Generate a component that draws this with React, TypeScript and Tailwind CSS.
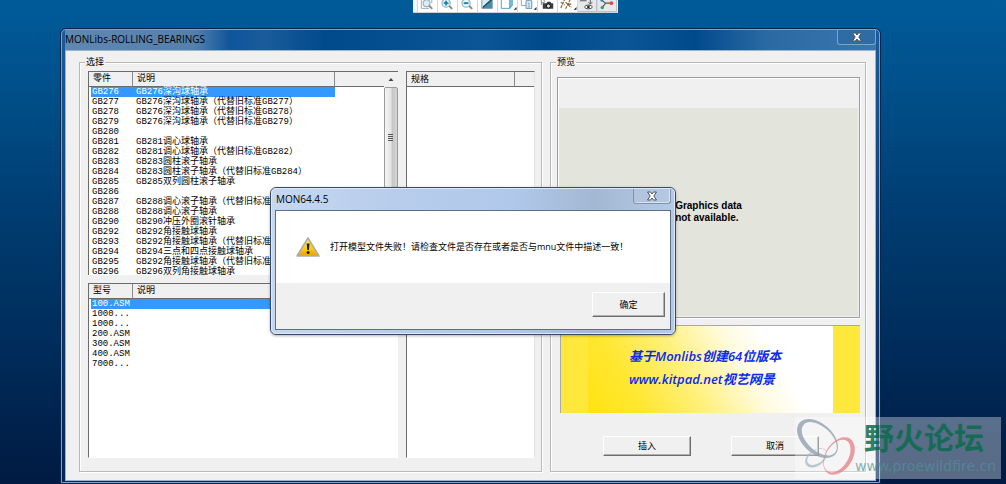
import type { ReactNode } from "react";

type Row = [string, string];

const parts: Row[] = [
  ["GB276", "GB276深沟球轴承"],
  ["GB277", "GB276深沟球轴承（代替旧标准GB277）"],
  ["GB278", "GB276深沟球轴承（代替旧标准GB278）"],
  ["GB279", "GB276深沟球轴承（代替旧标准GB279）"],
  ["GB280", ""],
  ["GB281", "GB281调心球轴承"],
  ["GB282", "GB281调心球轴承（代替旧标准GB282）"],
  ["GB283", "GB283圆柱滚子轴承"],
  ["GB284", "GB283圆柱滚子轴承（代替旧标准GB284）"],
  ["GB285", "GB285双列圆柱滚子轴承"],
  ["GB286", ""],
  ["GB287", "GB288调心滚子轴承（代替旧标准GB287）"],
  ["GB288", "GB288调心滚子轴承"],
  ["GB290", "GB290冲压外圈滚针轴承"],
  ["GB292", "GB292角接触球轴承"],
  ["GB293", "GB292角接触球轴承（代替旧标准GB293）"],
  ["GB294", "GB294三点和四点接触球轴承"],
  ["GB295", "GB292角接触球轴承（代替旧标准GB295）"],
  ["GB296", "GB296双列角接触球轴承"],
];

const models: Row[] = [
  ["100.ASM", ""],
  ["1000...", ""],
  ["1000...", ""],
  ["200.ASM", ""],
  ["300.ASM", ""],
  ["400.ASM", ""],
  ["7000...", ""],
];

const headCell =
  "h-[15px] border-r border-b border-r-[#8a8a8a] border-b-[#6a6a6a] bg-[#f0f0f0] p-0 pl-1 text-left font-normal";

function ListTable({ heads, rows }: { heads: Row; rows: Row[] }) {
  return (
    <table className="w-full table-fixed border-separate border-spacing-0 self-start font-['Liberation_Mono','Noto_Sans_CJK_SC',monospace] text-[9px] leading-[10px] text-black">
      <colgroup>
        <col className="w-[44px]" />
        <col className="w-[202px]" />
        <col />
      </colgroup>
      <thead>
        <tr>
          <th className={headCell}>{heads[0]}</th>
          <th className={headCell}>{heads[1]}</th>
          <th className="h-[15px] border-b border-[#6a6a6a] bg-[#f0f0f0] p-0" />
        </tr>
      </thead>
      <tbody className="whitespace-nowrap">
        {rows.map(([name, text], i) => (
          <tr key={i} className={i === 0 ? "text-white" : ""}>
            <td
              className={
                "h-[10px] border-l-2 border-transparent bg-clip-padding p-0 pl-px " +
                (i === 0 ? "bg-[#3399ff]" : "")
              }
            >
              {name}
            </td>
            <td className={"h-[10px] p-0 pl-[3px] " + (i === 0 ? "bg-[#3399ff]" : "")}>{text}</td>
            <td className="h-[10px] p-0" />
          </tr>
        ))}
      </tbody>
    </table>
  );
}

function Group({ title, className, children }: { title: string; className: string; children: ReactNode }) {
  return (
    <fieldset
      className={
        "min-w-0 border border-[#b9b9b9] shadow-[1px_1px_0_#fff,inset_1px_1px_0_#fff] " + className
      }
    >
      <legend className="bg-[#f0f0f0] px-px font-['Noto_Sans_CJK_SC',sans-serif] text-[9px] leading-[10px] text-black">
        {title}
      </legend>
      {children}
    </fieldset>
  );
}

function PushButton({ className, children }: { className: string; children: ReactNode }) {
  return (
    <button
      type="button"
      className={
        "border border-t-white border-r-[#6e6e6e] border-b-[#6e6e6e] border-l-white bg-[#f0f0f0] text-center font-['Noto_Sans_CJK_SC',sans-serif] text-[9px] leading-3 text-black shadow-[inset_-1px_-1px_0_#b0b0b0] " +
        className
      }
    >
      {children}
    </button>
  );
}

function CloseGlyph() {
  return (
    <svg viewBox="0 0 12 10" className="h-[10px] w-3" aria-hidden="true">
      <path
        d="M1.500 1h3L6 3l1.500-2h3L7.800 5l2.700 4h-3L6 7 4.500 9h-3l2.700-4z"
        fill="#fff"
        stroke="#4b5566"
        strokeWidth="1"
        strokeLinejoin="round"
      />
    </svg>
  );
}

function Lens({ mark }: { mark: string }) {
  return (
    <g>
      <circle cx="8.500" cy="4" r="4.300" fill="#e6f3fa" stroke="#9fb4c2" strokeWidth="1.300" />
      <path d="M11.800 7l3.200 3" stroke="#9a8068" strokeWidth="2" />
      <path d={mark} stroke="#1687b8" strokeWidth="2" fill="none" />
    </g>
  );
}

const corner = <path d="M19.500 8v3h-3z" fill="#222" />;

const tools: { label: string; art: ReactNode; pressed?: boolean }[] = [
  {
    label: "Refit",
    art: (
      <g>
        <path d="M3.500 0v9.500h8M14.500 0v4" stroke="#9aa7b0" fill="none" />
        <circle cx="9" cy="4" r="3.600" fill="#d8eef8" stroke="#8fb0c4" strokeWidth="1.200" />
        <path d="M11.500 6.500l3.500 3.500" stroke="#a8866a" strokeWidth="2" />
      </g>
    ),
  },
  { label: "Zoom in", art: <Lens mark="M6 4h5M8.500 1.500v5" /> },
  { label: "Zoom out", art: <Lens mark="M6 4h5" /> },
  {
    label: "Repaint",
    art: (
      <g>
        <path d="M4 0h11v9.500H4z" fill="#d3ebf4" />
        <path d="M15 0v9.500H4.500z" fill="#3d8fae" />
        <path d="M4 0v9.500h11V0" stroke="#7f9aa8" fill="none" />
        <path d="M5 8.500l9.500-8.500" stroke="#153d50" strokeWidth="1.300" />
      </g>
    ),
  },
  {
    label: "Display style",
    art: (
      <g>
        <path d="M3.500 0h9v9.500h-9z" fill="#fff" stroke="#52a2c4" />
        <path d="M12.500 9.500l2.500-3V0h-2.500z" fill="#82c4df" stroke="#52a2c4" />
        {corner}
      </g>
    ),
  },
  {
    label: "Saved views",
    art: (
      <g>
        <path d="M3.500 0v6.500h7V0" fill="#fff" stroke="#98a2aa" />
        <path d="M8.500 1.500h6v8h-6z" fill="#fff" stroke="#5f8ca8" />
        <path d="M10 4h3M10 6h3M10 8h3" stroke="#4a9cc0" />
        {corner}
      </g>
    ),
  },
  {
    label: "View manager",
    art: (
      <g>
        <path d="M3.500 0v6M6.500 0v3M3 3.500h4" stroke="#888" />
        <path d="M5 4h4l1-1.500h3L14 4h2v6H5z" fill="#3c3c40" />
        <circle cx="11" cy="7" r="2.200" fill="#ddd" stroke="#111" />
      </g>
    ),
  },
  {
    label: "Datum display",
    art: (
      <g>
        <path d="M3 9l4-9M3 3l4 3M8 10l5-10M8 3l6 6M11 5h4" stroke="#80622f" strokeWidth="1.200" strokeDasharray="3 1" />
        {corner}
      </g>
    ),
  },
  {
    label: "Annotation display",
    pressed: true,
    art: (
      <g>
        <path d="M2 1.500h7M13 0v5M11 3l2 2 2-2" stroke="#555" fill="none" />
        <ellipse cx="11" cy="8" rx="4" ry="2" fill="#fff" stroke="#444" />
        <circle cx="11" cy="8" r="1.400" fill="#222" />
      </g>
    ),
  },
  {
    label: "Spin center",
    pressed: true,
    art: (
      <g>
        <path d="M8 4L4 1M8 4L5 8M8 4h6" stroke="#555" strokeWidth="1.200" />
        <circle cx="4.500" cy="8.500" r="1.800" fill="#36a36b" />
        <circle cx="14" cy="4" r="2" fill="#dd4b4b" />
        <circle cx="4" cy="1" r="1.500" fill="#3576c4" />
      </g>
    ),
  },
];

function Toolbar() {
  return (
    <div className="absolute top-0 left-[413px] flex h-[13px] overflow-hidden border-b border-[#c9d2da] bg-[#f4f5f6] pr-px pl-1">
      {tools.map((t) => (
        <button
          key={t.label}
          type="button"
          aria-label={t.label}
          className={
            "h-3 w-5 border-l border-[#d4d8dc] " + (t.pressed ? "bg-[#e6e8eb] shadow-[inset_-1px_-1px_0_#bcc0c4]" : "bg-white")
          }
        >
          <svg viewBox="0 1 20 12" className="h-3 w-full" fill="none" aria-hidden="true">
            {t.art}
          </svg>
        </button>
      ))}
    </div>
  );
}

function ErrorDialog() {
  return (
    <div
      role="alertdialog"
      aria-label="MON64.4.5"
      className="absolute top-[187px] left-[270px] w-[406px] rounded-md border border-[#3b4a60] bg-[linear-gradient(90deg,#c6d8f0,#b8cdec_30%,#b0c8ea_60%,#a3b8d2_80%,#b4cbe8)] shadow-[0_1px_3px_rgba(0,0,0,0.3)]"
    >
      <div className="rounded-[5px] border border-[#dce9f8] px-[3px] pb-[3px]">
        <div className="flex h-[21px] items-start justify-between pl-px">
          <h2 className="pt-[2px] font-['Open_Sans','Noto_Sans',sans-serif] text-[10px] leading-4 text-black">MON64.4.5</h2>
          <button
            type="button"
            aria-label="关闭"
            className="flex h-[15px] w-[38px] items-center justify-center rounded-b-[3px] border border-t-0 border-[#8093ac] bg-[#b4c6dd]/60 shadow-[inset_-1px_-1px_0_rgba(255,255,255,0.5)]"
          >
            <CloseGlyph />
          </button>
        </div>
        <div className="border border-[#5d6f86] bg-[#f0f0f0]">
          <div className="flex h-[72px] items-center gap-[10px] bg-white pl-5">
            <svg viewBox="0 0 24 20" className="h-5 w-6" aria-hidden="true">
              <defs>
                <linearGradient id="warn" x1="0" y1="0" x2="0" y2="1">
                  <stop offset="0" stopColor="#fff04a" />
                  <stop offset="0.6" stopColor="#fdcb0a" />
                  <stop offset="1" stopColor="#f09a12" />
                </linearGradient>
              </defs>
              <path d="M12 1L23 19H1z" fill="url(#warn)" stroke="#a9adb2" strokeWidth="1.600" strokeLinejoin="round" />
              <path d="M10.700 6.500h2.800l-.6 6.500h-1.600z" fill="#1c1c10" />
              <circle cx="12.100" cy="15.600" r="1.500" fill="#1c1c10" />
            </svg>
            <p className="font-['Open_Sans','Noto_Sans_CJK_SC',sans-serif] text-[9px] leading-3 whitespace-nowrap text-black">
              打开模型文件失败！请检查文件是否存在或者是否与mnu文件中描述一致！
            </p>
          </div>
          <div className="flex justify-end pt-[9px] pr-[5px] pb-3">
            <PushButton className="h-[25px] w-[73px]">确定</PushButton>
          </div>
        </div>
      </div>
    </div>
  );
}

function Watermark() {
  return (
    <div className="absolute top-[417px] left-[795px] flex h-[62px] w-[206px] bg-white/35">
      <svg viewBox="0 0 60 62" className="h-[62px] w-[60px] shrink-0" aria-hidden="true">
        <g fillRule="evenodd">
          <path
            transform="rotate(42 22.500 21.500)"
            d="M-1.500 21.500a24 15 0 1 0 48 0a24 15 0 1 0-48 0zM3 20.500a21 12 0 1 1 42 0a21 12 0 1 1-42 0z"
            fill="#8a9bab"
            opacity=".75"
          />
          <path
            transform="rotate(-35 21 41)"
            d="M9 41a12 8 0 1 0 24 0a12 8 0 1 0-24 0zM11.500 40.500a11 6.500 0 1 1 22 0a11 6.500 0 1 1-22 0z"
            fill="#a9b5c1"
            opacity=".75"
          />
          <path
            transform="rotate(-58 44 39)"
            d="M23.500 39a20.500 13.500 0 1 0 41 0a20.500 13.500 0 1 0-41 0zM25 37.500a18 11 0 1 1 36 0a18 11 0 1 1-36 0z"
            fill="#e37c84"
            opacity=".75"
          />
        </g>
      </svg>
      <div className="flex flex-col">
        <span className="pl-[9px] font-['Noto_Sans_CJK_SC',sans-serif] text-[30px] leading-[38px] font-bold whitespace-nowrap text-[#0b6b4d]/85">
          野火论坛
        </span>
        <span className="font-['DejaVu_Sans',sans-serif] text-[14px] leading-[22px] text-[#4f9299]/70">
          www.proewildfire.cn
        </span>
      </div>
    </div>
  );
}

export default function App() {
  return (
    <main className="relative min-h-screen w-full overflow-hidden bg-[linear-gradient(180deg,#005b99_0%,#00528d_15%,#003c70_45%,#002a58_75%,#001a42_100%)] pt-7 pr-[125px] pl-[60px]">
      <Toolbar />

      <section className="rounded-t-md border border-[#06264a] bg-[linear-gradient(180deg,#1a5c9b_0%,#14508c_20%,#0d3c74_50%,#07255a_100%)]">
        <div className="rounded-t-[5px] border border-[#7fa3c6] px-[3px] pb-px">
          <header className="flex h-5 items-start justify-between bg-[linear-gradient(90deg,#5f88b0_0px,#5580ac_130px,#0f559a_165px,#1a5c9b_200px,#004a8c_260px,#0b5596_420px,#004a8c_480px,#0b5596_560px,#004a8c_630px,#2a69a3_700px,#3b76ad_100%)]">
            <h1 className="pt-px font-['Open_Sans','Noto_Sans',sans-serif] text-[10px] leading-4 text-black">
              MONLibs-ROLLING_BEARINGS
            </h1>
            <button
              type="button"
              aria-label="关闭"
              className="flex h-[15px] w-[39px] items-center justify-center rounded-b-[3px] border border-t-0 border-[#7fa3c6] bg-[#2f6ca6]"
            >
              <CloseGlyph />
            </button>
          </header>

          <div className="flex gap-2 border border-[#9db3c8] bg-[#f0f0f0] pt-[6px] pr-[9px] pb-2 pl-[13px]">
            <Group title="选择" className="flex-1 pr-[6px] pb-3 pl-[5px]">
              <div className="flex gap-2 pt-1 pl-[3px]">
                <div className="flex min-w-0 flex-1 flex-col gap-2">
                  <div className="flex h-[204px] overflow-hidden border-t border-l border-[#6b6b6b] bg-white">
                    <div className="min-w-0 flex-1">
                      <ListTable heads={["零件", "说明"]} rows={parts} />
                    </div>
                    <div className="flex w-[14px] flex-col bg-[#f0f0f0]">
                      <svg viewBox="0 0 14 15" className="h-[15px] w-[14px]" aria-hidden="true">
                        <path d="M4.500 9L7 6l2.500 3z" fill="#444" />
                      </svg>
                      <div className="flex h-[101px] items-center justify-center rounded-[2px] border border-[#9a9a9a] bg-[linear-gradient(90deg,#f5f5f5,#e4e4e4_50%,#c6c6c8_60%,#d4d4d6)]">
                        <svg viewBox="0 0 6 7" className="h-[7px] w-[6px]" aria-hidden="true">
                          <path d="M0 .5h5M0 2.500h5M0 4.500h5M0 6.500h5" stroke="#555" />
                        </svg>
                      </div>
                    </div>
                  </div>
                  <div className="h-[175px] overflow-hidden border border-t-[#6b6b6b] border-r-white border-b-white border-l-[#6b6b6b] bg-white">
                    <ListTable heads={["型号", "说明"]} rows={models} />
                  </div>
                </div>

                <div className="w-[129px] border border-t-[#6b6b6b] border-r-[#e4e4e4] border-b-white border-l-[#6b6b6b] bg-white">
                  <table className="w-full table-fixed border-separate border-spacing-0 font-['Noto_Sans_CJK_SC',sans-serif] text-[9px] leading-[10px] text-black">
                    <colgroup>
                      <col />
                      <col className="w-[19px]" />
                    </colgroup>
                    <thead>
                      <tr>
                        <th className={headCell}>规格</th>
                        <th className="h-[15px] border-b border-[#6a6a6a] bg-[#f0f0f0] p-0" />
                      </tr>
                    </thead>
                  </table>
                </div>
              </div>
            </Group>

            <Group title="预览" className="w-[316px] pr-[5px] pb-[15px] pl-[5px]">
              <div className="flex flex-col pt-[10px] pl-px">
                <div className="flex h-[241px] flex-col border border-[#9c9c9c] p-px shadow-[1px_1px_0_#fff,inset_1px_1px_0_#fff]">
                  <div className="h-[29px]" />
                  <div className="flex flex-1 items-center justify-center bg-[#e3e4dc]">
                    <p className="font-['Liberation_Sans',Arial,sans-serif] text-[10px] leading-3 font-bold text-black">
                      Graphics data
                      <br />
                      not available.
                    </p>
                  </div>
                </div>

                <div className="mt-[7px] ml-[3px] flex h-[88px] border-t border-l border-[#a9a9a9] bg-[#ffe83c] pr-[27px] pl-[27px]">
                  <div className="flex-1 bg-[linear-gradient(60deg,#ffe312_0%,#ffe733_20%,#fff07a_40%,#fffbe0_62%,#ffffff_75%)] pt-[19px] pl-[41px] font-['Open_Sans','Noto_Sans_CJK_SC',sans-serif] text-[13px] leading-[23px] font-semibold whitespace-nowrap text-[#0a2af0] italic">
                    <p>基于Monlibs创建64位版本</p>
                    <p>www.kitpad.net视艺网景</p>
                  </div>
                </div>

                <div className="mt-[23px] flex gap-10 pl-[46px]">
                  <PushButton className="h-5 w-[88px]">插入</PushButton>
                  <PushButton className="h-5 w-[88px]">取消</PushButton>
                </div>
              </div>
            </Group>
          </div>
        </div>
      </section>

      <ErrorDialog />
      <Watermark />
    </main>
  );
}
